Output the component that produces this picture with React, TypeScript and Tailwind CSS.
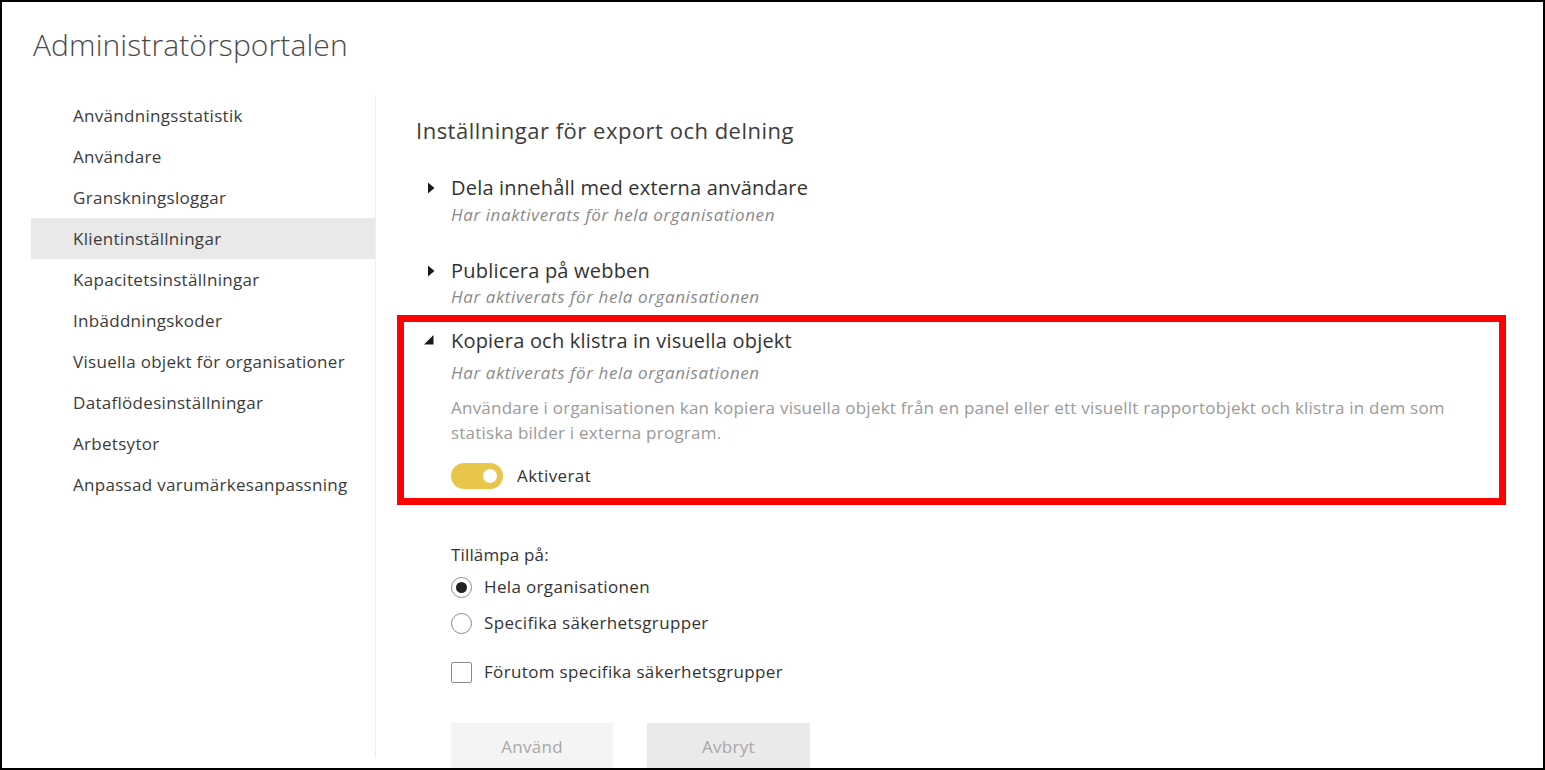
import React from "react";

const navItems = [
  "Användningsstatistik",
  "Användare",
  "Granskningsloggar",
  "Klientinställningar",
  "Kapacitetsinställningar",
  "Inbäddningskoder",
  "Visuella objekt för organisationer",
  "Dataflödesinställningar",
  "Arbetsytor",
  "Anpassad varumärkesanpassning",
];

const font = { fontFamily: "'Open Sans', 'Noto Sans', sans-serif" };

const Collapsed = () => (
  <svg width="8" height="12" viewBox="0 0 8 12" className="shrink-0">
    <path d="M1 0.5 L7.5 6 L1 11.5 Z" fill="#1a1a1a" />
  </svg>
);

const Expanded = () => (
  <svg width="12" height="12" viewBox="0 0 12 12" className="shrink-0">
    <path d="M10.5 1 L10.5 10.5 L1 10.5 Z" fill="#1a1a1a" />
  </svg>
);

const App: React.FC = () => {
  return (
    <div
      className="w-[1545px] h-[770px] bg-white border-2 border-black overflow-hidden flex flex-col"
      style={font}
    >
      <h1 className="ml-[31px] mt-[23px] text-[30px] leading-[40px] font-light text-[#4a4a4a] tracking-[0.1px]">
        Administratörsportalen
      </h1>

      <div className="flex flex-1 mt-[30px]">
        <nav className="ml-[29px] w-[345px] border-r border-[#ededed] flex flex-col mb-[13px]">
          {navItems.map((item, i) => (
            <div
              key={item}
              className={`h-[41px] flex items-center pl-[42px] text-[17px] tracking-[0.3px] text-[#3b3b3b] ${
                i === 3 ? "bg-[#e9e9e9]" : ""
              }`}
            >
              {item}
            </div>
          ))}
        </nav>

        <main className="flex-1 pl-[21px] pt-[20px]">
          <h2 className="ml-[19px] text-[22px] leading-[30px] tracking-[0.5px] text-[#3d3d3d]">
            Inställningar för export och delning
          </h2>

          <div className="mt-[29px] flex">
            <div className="w-[54px] flex justify-end pr-[16px] pt-[8px]">
              <Collapsed />
            </div>
            <div>
              <div className="text-[20px] leading-[28px] tracking-[0.2px] text-[#333]">
                Dela innehåll med externa användare
              </div>
              <div className="mt-px text-[17px] leading-[24px] tracking-[0.6px] italic text-[#8a8a8a]">
                Har inaktiverats för hela organisationen
              </div>
            </div>
          </div>

          <div className="mt-[30px] flex">
            <div className="w-[54px] flex justify-end pr-[16px] pt-[8px]">
              <Collapsed />
            </div>
            <div>
              <div className="text-[20px] leading-[28px] tracking-[0.2px] text-[#333]">
                Publicera på webben
              </div>
              <div className="text-[17px] leading-[24px] tracking-[0.6px] italic text-[#8a8a8a]">
                Har aktiverats för hela organisationen
              </div>
            </div>
          </div>

          <div className="mt-[6px] w-[1109px] h-[190px] border-[7px] border-[#ff0000] flex">
            <div className="w-[47px] flex justify-end pr-[16px] pt-[12px]">
              <Expanded />
            </div>
            <div className="pt-[5px]">
              <div className="text-[20px] leading-[28px] tracking-[0.2px] text-[#333]">
                Kopiera och klistra in visuella objekt
              </div>
              <div className="mt-[6px] text-[17px] leading-[24px] tracking-[0.6px] italic text-[#8a8a8a]">
                Har aktiverats för hela organisationen
              </div>
              <p className="mt-[10px] text-[17px] leading-[25px] tracking-[0.23px] text-[#9a9a9a]">
                Användare i organisationen kan kopiera visuella objekt från en panel eller ett visuellt
                rapportobjekt och klistra in dem som
                <br />
                statiska bilder i externa program.
              </p>
              <div className="mt-[18px] flex items-center gap-[14px]">
                <div className="w-[52px] h-[26px] rounded-full bg-[#e8c54b] flex items-center justify-end pr-[6px]">
                  <div className="w-[14px] h-[14px] rounded-full bg-white" />
                </div>
                <span className="text-[17px] tracking-[0.4px] text-[#333]">Aktiverat</span>
              </div>
            </div>
          </div>

          <div className="ml-[54px]">
            <div className="mt-[38px] text-[17px] leading-[24px] tracking-[0.15px] text-[#333]">
              Tillämpa på:
            </div>
            <div className="mt-[2px] h-[36px] flex items-center gap-[12px]">
              <div className="w-[21px] h-[21px] rounded-full border border-[#8a8a8a] flex items-center justify-center">
                <div className="w-[11px] h-[11px] rounded-full bg-[#222]" />
              </div>
              <span className="text-[17px] tracking-[0.35px] text-[#333]">Hela organisationen</span>
            </div>
            <div className="h-[36px] flex items-center gap-[12px]">
              <div className="w-[21px] h-[21px] rounded-full border border-[#8a8a8a]" />
              <span className="text-[17px] tracking-[0.35px] text-[#333]">Specifika säkerhetsgrupper</span>
            </div>
            <div className="mt-[13px] h-[36px] flex items-center gap-[12px]">
              <div className="w-[21px] h-[21px] border border-[#8a8a8a] rounded-[2px]" />
              <span className="text-[17px] tracking-[0.35px] text-[#333]">
                Förutom specifika säkerhetsgrupper
              </span>
            </div>
            <div className="mt-[33px] flex gap-[34px]">
              <button className="w-[162px] h-[48px] bg-[#f4f4f4] text-[17px] tracking-[0.3px] text-[#a8a8a8]">
                Använd
              </button>
              <button className="w-[163px] h-[48px] bg-[#eaeaea] text-[17px] tracking-[0.3px] text-[#a8a8a8]">
                Avbryt
              </button>
            </div>
          </div>
        </main>
      </div>
    </div>
  );
};

export default App;
